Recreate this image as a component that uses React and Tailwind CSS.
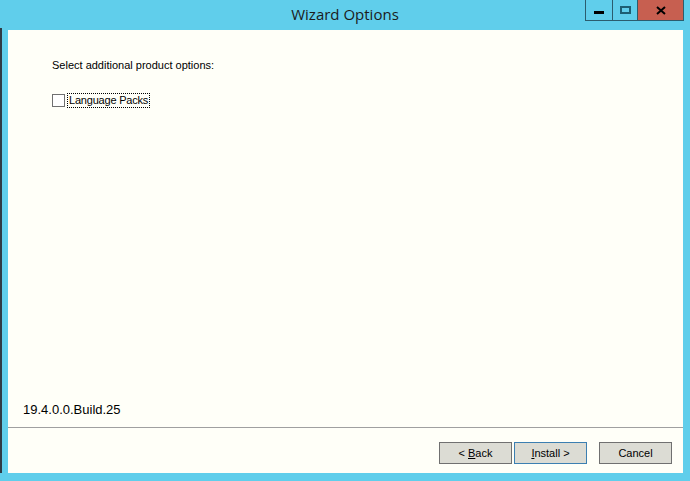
import React from 'react';

// Cadre de fenêtre façon Windows 8 / Server 2012
const TitleButtons = () => (
    <div className="flex h-[21px] border border-t-0 border-[#2b5d6e]">
        <div className="w-[27px] flex items-center justify-center border-r border-[#2b5d6e]">
            <div className="w-[10px] h-[3px] bg-black mt-[4px]"></div>
        </div>
        <div className="w-[25px] flex items-center justify-center border-r border-[#2b5d6e]">
            <div className="w-[11px] h-[8px] border-2 border-[#1d5f73]"></div>
        </div>
        <div className="w-[45px] flex items-center justify-center bg-[#c75f50]">
            <svg width="10" height="9" viewBox="0 0 10 9">
                <path d="M1 1 L9 8 M9 1 L1 8" stroke="#000" strokeWidth="2" />
            </svg>
        </div>
    </div>
);

const Button = ({ children, primary }) => (
    <button
        className={
            primary
                ? 'w-[73px] h-[22px] bg-[#dcdcd4] border border-[#3c7fb1] text-[11px] text-black'
                : 'w-[73px] h-[22px] bg-[#dcdcd4] border border-[#707070] text-[11px] text-black'
        }
    >
        {children}
    </button>
);

export default function App() {
    return (
        <div className="w-[690px] h-[481px] bg-[#60ceeb] flex flex-col overflow-hidden" style={{ fontFamily: '"Liberation Sans", Arial, sans-serif' }}>
            {/* barre de titre */}
            <div className="relative h-[30px] flex justify-end pr-[6px] shrink-0">
                <div className="absolute inset-0 flex items-center justify-center pb-[1px] text-[15px] text-[#1b1b1b]" style={{ fontFamily: '"Open Sans", "Noto Sans", sans-serif' }}>
                    Wizard Options
                </div>
                <div className="relative">
                    <TitleButtons />
                </div>
            </div>

            <div className="flex flex-1 min-h-0">
                <div className="w-[2px] bg-[#2f3a44] -mt-[2px]"></div>
                <div className="w-[6px]"></div>
                {/* zone client */}
                <div className="w-[675px] h-[443px] bg-[#fffff8] flex flex-col">
                    <div className="flex-1 pl-[44px] pt-[27px] text-[11px] text-black">
                        <div>Select additional product options:</div>
                        <label className="flex items-center mt-[19px]">
                            <span className="w-[13px] h-[13px] border border-[#707070] bg-white"></span>
                            <span className="ml-[2px] px-[1px] leading-[13px] tracking-[-0.2px] border border-dotted border-black">Language Packs</span>
                        </label>
                    </div>
                    <div className="pl-[15px] pb-[10px] text-[13px] leading-[15px] text-black">19.4.0.0.Build.25</div>
                    <div className="h-[1px] bg-[#a0a0a0]"></div>
                    <div className="h-[45px] flex items-start justify-end pt-[14px] pr-[11px]">
                        <Button>&lt; <u>B</u>ack</Button>
                        <div className="w-[2px]"></div>
                        <Button primary><u>I</u>nstall &gt;</Button>
                        <div className="w-[12px]"></div>
                        <Button>Cancel</Button>
                    </div>
                </div>
            </div>
            <div className="h-[8px] shrink-0"></div>
        </div>
    );
}
